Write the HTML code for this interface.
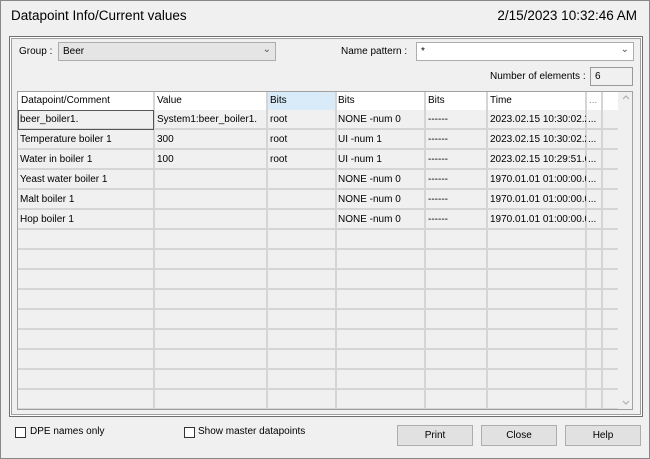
<!DOCTYPE html>
<html><head><style>
*{margin:0;padding:0;box-sizing:border-box}
body{width:650px;height:459px;background:#f0f0f0;font-family:"Liberation Sans",Arial,sans-serif;font-size:10px;color:#000;position:relative;overflow:hidden;border:1px solid #888}
.a{position:absolute;white-space:nowrap}
.frame{position:absolute;left:8px;top:35px;width:634px;height:381px;border:1px solid #707070;box-shadow:inset 0 0 0 1px #fff, inset 0 0 0 2px #a0a0a0}
.combo{position:absolute;height:19px;border:1px solid #adadad;font-size:10px;padding:3px 4px}
.tbl{position:absolute;left:16px;top:90px;width:616px;height:319px;border:1px solid #a0a0a0;background:#f0f0f0;overflow:hidden}
.tbl .a{font-size:10px}
.btn{position:absolute;top:424px;width:76px;height:21px;border:1px solid #adadad;background:#e1e1e1;text-align:center;line-height:19px;font-size:10px}
.cb{position:absolute;width:11px;height:11px;border:1px solid #333;background:#fff}
</style></head><body>
<div class="a" style="left:10px;top:7px;font-size:13.5px">Datapoint Info/Current values</div>
<div class="a" style="right:12px;top:7px;font-size:13.5px">2/15/2023 10:32:46 AM</div>
<div class="frame"></div>
<div class="a" style="left:18px;top:45px">Group :</div>
<div class="combo" style="left:57px;top:41px;width:218px;background:#e5e5e5">Beer<span style="position:absolute;right:4px;top:1px;color:#555">&#8964;</span></div>
<div class="a" style="left:340px;top:45px">Name pattern :</div>
<div class="combo" style="left:415px;top:41px;width:218px;background:#fff">*<span style="position:absolute;right:4px;top:1px;color:#555">&#8964;</span></div>
<div class="a" style="left:489px;top:70px">Number of elements :</div>
<div class="combo" style="left:589px;top:66px;width:43px;background:#f0f0f0;border-color:#999">6</div>
<div class="tbl">
<svg width="616" height="319" style="position:absolute;left:0;top:0">
<rect x="0" y="0" width="600" height="18" fill="#fff"/>
<rect x="249" y="0" width="68" height="18" fill="#d9ebf9"/>
<rect x="601" y="0" width="15" height="319" fill="#f0f0f0"/>
<g stroke="#d5d5d5" stroke-width="2">
<line x1="136" y1="0" x2="136" y2="319"/><line x1="249" y1="0" x2="249" y2="319"/><line x1="318" y1="0" x2="318" y2="319"/><line x1="407" y1="0" x2="407" y2="319"/><line x1="469" y1="0" x2="469" y2="319"/><line x1="568" y1="0" x2="568" y2="319"/><line x1="584" y1="0" x2="584" y2="319"/>
<line x1="0" y1="37" x2="600" y2="37"/><line x1="0" y1="57" x2="600" y2="57"/><line x1="0" y1="77" x2="600" y2="77"/><line x1="0" y1="97" x2="600" y2="97"/><line x1="0" y1="117" x2="600" y2="117"/><line x1="0" y1="137" x2="600" y2="137"/><line x1="0" y1="157" x2="600" y2="157"/><line x1="0" y1="177" x2="600" y2="177"/><line x1="0" y1="197" x2="600" y2="197"/><line x1="0" y1="217" x2="600" y2="217"/><line x1="0" y1="237" x2="600" y2="237"/><line x1="0" y1="257" x2="600" y2="257"/><line x1="0" y1="277" x2="600" y2="277"/><line x1="0" y1="297" x2="600" y2="297"/><line x1="0" y1="317" x2="600" y2="317"/>
</g>
<rect x="0.5" y="18.5" width="135" height="19" fill="none" stroke="#555"/>
<path d="M605 7 l3 -3 l3 3" fill="none" stroke="#aaa"/><path d="M605 309 l3 3 l3 -3" fill="none" stroke="#aaa"/>
</svg>
<div class="a" style="left:3px;top:3px">Datapoint/Comment</div><div class="a" style="left:139px;top:3px">Value</div><div class="a" style="left:252px;top:3px">Bits</div><div class="a" style="left:320px;top:3px">Bits</div><div class="a" style="left:410px;top:3px">Bits</div><div class="a" style="left:472px;top:3px">Time</div><div class="a" style="left:571px;top:3px;color:#888">...</div>
<div class="a" style="left:2px;top:22px">beer_boiler1.</div><div class="a" style="left:139px;top:22px">System1:beer_boiler1.</div><div class="a" style="left:252px;top:22px">root</div><div class="a" style="left:320px;top:22px">NONE -num 0</div><div class="a" style="left:410px;top:22px">------</div><div class="a" style="left:472px;top:22px;width:96px;overflow:hidden">2023.02.15 10:30:02.2</div><div class="a" style="left:570px;top:22px">...</div>
<div class="a" style="left:2px;top:42px">Temperature boiler 1</div><div class="a" style="left:139px;top:42px">300</div><div class="a" style="left:252px;top:42px">root</div><div class="a" style="left:320px;top:42px">UI -num 1</div><div class="a" style="left:410px;top:42px">------</div><div class="a" style="left:472px;top:42px;width:96px;overflow:hidden">2023.02.15 10:30:02.2</div><div class="a" style="left:570px;top:42px">...</div>
<div class="a" style="left:2px;top:62px">Water in boiler 1</div><div class="a" style="left:139px;top:62px">100</div><div class="a" style="left:252px;top:62px">root</div><div class="a" style="left:320px;top:62px">UI -num 1</div><div class="a" style="left:410px;top:62px">------</div><div class="a" style="left:472px;top:62px;width:96px;overflow:hidden">2023.02.15 10:29:51.6</div><div class="a" style="left:570px;top:62px">...</div>
<div class="a" style="left:2px;top:82px">Yeast water boiler 1</div><div class="a" style="left:320px;top:82px">NONE -num 0</div><div class="a" style="left:410px;top:82px">------</div><div class="a" style="left:472px;top:82px;width:96px;overflow:hidden">1970.01.01 01:00:00.0</div><div class="a" style="left:570px;top:82px">...</div>
<div class="a" style="left:2px;top:102px">Malt boiler 1</div><div class="a" style="left:320px;top:102px">NONE -num 0</div><div class="a" style="left:410px;top:102px">------</div><div class="a" style="left:472px;top:102px;width:96px;overflow:hidden">1970.01.01 01:00:00.0</div><div class="a" style="left:570px;top:102px">...</div>
<div class="a" style="left:2px;top:122px">Hop boiler 1</div><div class="a" style="left:320px;top:122px">NONE -num 0</div><div class="a" style="left:410px;top:122px">------</div><div class="a" style="left:472px;top:122px;width:96px;overflow:hidden">1970.01.01 01:00:00.0</div><div class="a" style="left:570px;top:122px">...</div>
</div>
<div class="cb" style="left:14px;top:426px"></div><div class="a" style="left:29px;top:425px">DPE names only</div>
<div class="cb" style="left:183px;top:426px"></div><div class="a" style="left:197px;top:425px">Show master datapoints</div>
<div class="btn" style="left:396px">Print</div>
<div class="btn" style="left:480px">Close</div>
<div class="btn" style="left:564px">Help</div>
</body></html>
